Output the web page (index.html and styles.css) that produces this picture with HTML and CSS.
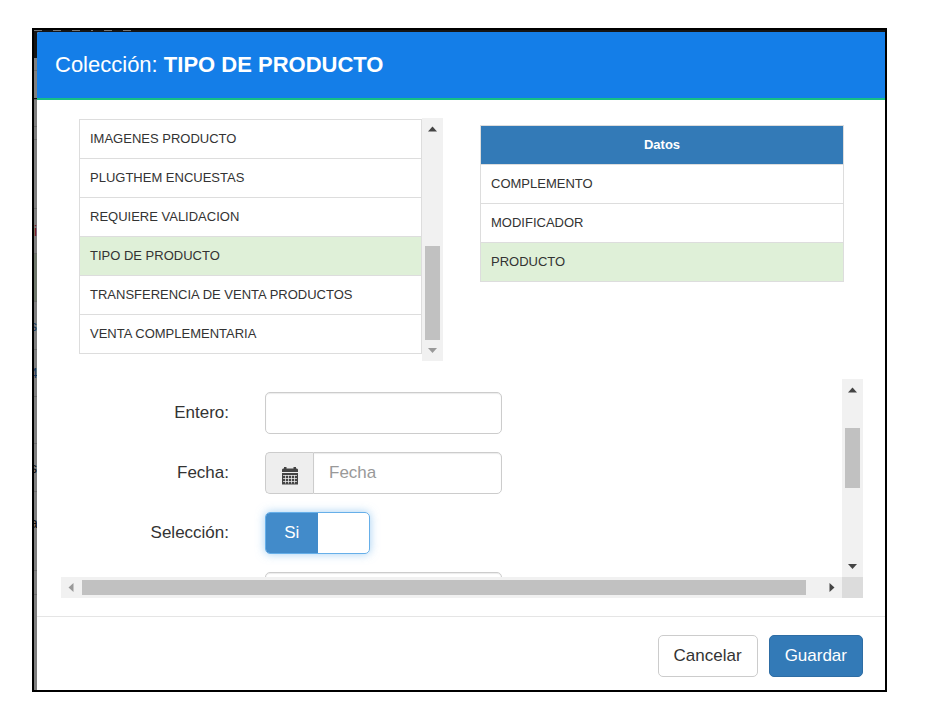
FILE: index.html
```html
<!DOCTYPE html>
<html lang="es">
<head>
<meta charset="utf-8">
<title>Colección: TIPO DE PRODUCTO</title>
<link rel="stylesheet" href="styles.css">
</head>
<body>
<div class="frame">
  <div class="behind" aria-hidden="true">
    <div class="nav-edge"><i></i><i></i><i></i><i class="dot"></i><i></i><i></i></div>
    <div class="row h13"></div>
    <div class="row h56">H</div>
    <div class="row h13"></div>
    <div class="row h69"></div>
    <div class="row h45 red">i</div>
    <div class="row h48 green"></div>
    <div class="row h48 blue">s</div>
    <div class="row h47 blue">4</div>
    <div class="row h47"></div>
    <div class="row h48">s</div>
    <div class="row h79">a</div>
    <div class="row h24"></div>
  </div>
  <main class="modal">
    <header class="modal-header"><h1>Colección: <strong>TIPO DE PRODUCTO</strong></h1></header>
    <div class="modal-body">
      <div class="lists">
        <section class="list-scroll">
          <table class="grid">
            <tbody>
              <tr><td>IMAGENES PRODUCTO</td></tr>
              <tr><td>PLUGTHEM ENCUESTAS</td></tr>
              <tr><td>REQUIERE VALIDACION</td></tr>
              <tr class="selected"><td>TIPO DE PRODUCTO</td></tr>
              <tr><td>TRANSFERENCIA DE VENTA PRODUCTOS</td></tr>
              <tr><td>VENTA COMPLEMENTARIA</td></tr>
            </tbody>
          </table>
          <div class="bar vertical">
            <svg class="arrow" viewBox="0 0 21 21"><path d="M6 13.5h9L10.5 8.5z"/></svg>
            <div class="track"><div class="thumb list-thumb"></div></div>
            <svg class="arrow off" viewBox="0 0 21 21"><path d="M6 8h9L10.5 13z"/></svg>
          </div>
        </section>
        <section class="data">
          <table class="grid">
            <thead><tr><th scope="col">Datos</th></tr></thead>
            <tbody>
              <tr><td>COMPLEMENTO</td></tr>
              <tr><td>MODIFICADOR</td></tr>
              <tr class="selected"><td>PRODUCTO</td></tr>
            </tbody>
          </table>
        </section>
      </div>
      <div class="pane">
        <form class="form">
          <div class="field">
            <label for="entero">Entero:</label>
            <input class="control" id="entero" type="text">
          </div>
          <div class="field">
            <label for="fecha">Fecha:</label>
            <div class="group">
              <span class="addon">
                <svg viewBox="0 0 16 18" width="16" height="18"><path fill="#444" d="M0 5V2.5L1 1.5H2V0H4.500V1.500H11.500V0H14V1.500H15L16 2.500V5zM0 6H16V17.500H0z"/><path stroke="#eee" fill="none" d="M1 8.500H15M1 11.500H15M1 14.500H15M3.500 8V16.500M6.500 8V16.500M9.500 8V16.500M12.500 8V16.500" opacity=".75"/></svg>
              </span>
              <input class="control" id="fecha" type="text" placeholder="Fecha">
            </div>
          </div>
          <div class="field">
            <label for="seleccion">Selección:</label>
            <div class="switch">
              <input id="seleccion" type="checkbox" role="switch" checked>
              <span class="on">Si</span><span class="off-side"></span>
            </div>
          </div>
          <div class="field">
            <span></span>
            <input class="control" type="text" aria-label="Texto">
          </div>
        </form>
        <div class="bar vertical">
          <svg class="arrow" viewBox="0 0 21 21"><path d="M6 13.5h9L10.5 8.5z"/></svg>
          <div class="track"><div class="thumb pane-thumb"></div></div>
          <svg class="arrow" viewBox="0 0 21 21"><path d="M6 8h9L10.5 13z"/></svg>
        </div>
        <div class="bar horizontal">
          <svg class="arrow off" viewBox="0 0 21 21"><path d="M12.5 6v9L7.5 10.5z"/></svg>
          <div class="track"><div class="thumb wide-thumb"></div></div>
          <svg class="arrow" viewBox="0 0 21 21"><path d="M8.5 6v9L13.5 10.5z"/></svg>
        </div>
        <div class="corner"></div>
      </div>
    </div>
    <footer class="modal-footer">
      <button class="btn" type="button">Cancelar</button>
      <button class="btn primary" type="button">Guardar</button>
    </footer>
  </main>
</div>
</body>
</html>
```
FILE: styles.css
```css
* { box-sizing: border-box; }

body {
  margin: 0;
  padding: 28px 40px 34px 32px;
  background: #fff;
  color: #333;
  font-family: "Liberation Sans", Arial, sans-serif;
  font-size: 17px;
  line-height: 24px;
}

.frame {
  position: relative;
  overflow: hidden;
  border: 2px solid #000;
  padding: 2px 0 0 3px;
  background: #7f7f7f;
}

/* Page dimmed behind the dialog */
.behind {
  position: absolute;
  inset: 0;
  display: flex;
  flex-direction: column;
}
.nav-edge {
  display: flex;
  gap: 11px;
  height: 28px;
  flex: none;
  background: #151515;
}
.nav-edge i { width: 8px; height: 1px; background: #777; }
.nav-edge .dot { width: 2px; }
.row {
  display: flex;
  align-items: center;
  flex: none;
  border-bottom: 1px solid #6c6c6c;
  color: #111;
  font-size: 14px;
  line-height: 14px;
  text-indent: -4px;
}
.h13 { height: 13px; }
.h24 { height: 24px; }
.h45 { height: 45px; }
.h47 { height: 47px; }
.h48 { height: 48px; }
.h56 { height: 56px; }
.h69 { height: 69px; }
.h79 { height: 79px; padding-bottom: 16px; }
.row.red { color: #7a1020; text-indent: 0; }
.row.blue { color: #1a3a5c; }
.row.green { background: #6f776b; }

.modal {
  position: relative;
  overflow: hidden;
  border-radius: 2px 0 0 0;
  background: #fff;
}

.modal-header {
  padding: 20px 18px;
  border-bottom: 2px solid #16bf85;
  background: #147ee8;
  color: #fff;
}
.modal-header h1 {
  margin: 0;
  font-size: 22px;
  font-weight: 400;
  line-height: 26px;
}

.modal-body { padding: 18px 22px 18px 24px; }

.lists {
  display: grid;
  grid-template-columns: 1fr 1fr;
  column-gap: 37px;
  align-items: start;
  padding: 0 19px 0 18px;
}
.list-scroll {
  display: flex;
  align-items: stretch;
  height: 243px;
}
.list-scroll .grid { flex: 1; margin-top: 1px; align-self: flex-start; }
.data { padding-top: 7px; }

.grid {
  width: 100%;
  border-collapse: collapse;
  font-size: 13px;
  line-height: 18px;
}
.grid td, .grid th {
  height: 39px;
  padding: 0 10px;
  border: 1px solid #ddd;
  text-align: left;
}
.grid th {
  background: #337ab7;
  color: #fff;
  text-align: center;
}
.grid .selected td { background: #dff0d8; }

.bar { display: flex; flex: none; background: #f1f1f1; }
.bar.vertical { flex-direction: column; width: 21px; }
.bar.horizontal { height: 21px; }
.arrow { flex: none; width: 21px; height: 21px; fill: #444; }
.arrow.off { fill: #999; }
.track { display: flex; flex: 1; min-height: 0; }
.vertical .track { flex-direction: column; padding: 0 3px; }
.horizontal .track { padding: 3px 0; }
.thumb { background: #c1c1c1; }
.list-thumb { height: 94px; margin-top: auto; }
.pane-thumb { height: 60px; margin-top: 28px; }
.wide-thumb { width: 98%; }

.pane {
  display: grid;
  grid-template-columns: 1fr 21px;
  grid-template-rows: 198px 21px;
  margin-top: 18px;
}
.corner { background: #dcdcdc; }

.form {
  display: flex;
  flex-direction: column;
  gap: 18px;
  min-height: 0;
  overflow: hidden;
  padding-top: 13px;
}
.field {
  display: grid;
  grid-template-columns: 168px 237px;
  column-gap: 36px;
  align-items: center;
  flex: none;
  height: 42px;
}
.field label { text-align: right; }

.control {
  width: 100%;
  height: 42px;
  padding: 0 15px;
  border: 1px solid #ccc;
  border-radius: 5px;
  background: #fff;
  box-shadow: inset 0 1px 1px rgba(0, 0, 0, .08);
  color: #555;
  font: inherit;
}
.control::placeholder { color: #999; opacity: 1; }

.group { display: flex; }
.addon {
  display: flex;
  align-items: center;
  justify-content: center;
  flex: none;
  width: 48px;
  border: 1px solid #ccc;
  border-right: 0;
  border-radius: 5px 0 0 5px;
  background: #eee;
}
.addon svg { margin-top: 5px; }
.group .control { border-radius: 0 5px 5px 0; }

.switch {
  position: relative;
  display: flex;
  width: 105px;
  height: 42px;
  overflow: hidden;
  border: 1px solid #66afe9;
  border-radius: 5px;
  box-shadow: 0 0 10px rgba(102, 175, 233, .6);
}
.switch input {
  position: absolute;
  inset: 0;
  width: 100%;
  height: 100%;
  margin: 0;
  opacity: 0;
}
.on, .off-side { flex: 1; line-height: 40px; text-align: center; }
.on { background: #428bca; color: #fff; }

.modal-footer {
  display: flex;
  justify-content: flex-end;
  gap: 11px;
  padding: 18px 22px 13px;
  border-top: 1px solid #e5e5e5;
}
.btn {
  height: 42px;
  padding: 0 15px;
  border: 1px solid #ccc;
  border-radius: 5px;
  background: #fff;
  color: #333;
  font: inherit;
}
.btn.primary {
  border-color: #2e6da4;
  background: #337ab7;
  color: #fff;
}
```
